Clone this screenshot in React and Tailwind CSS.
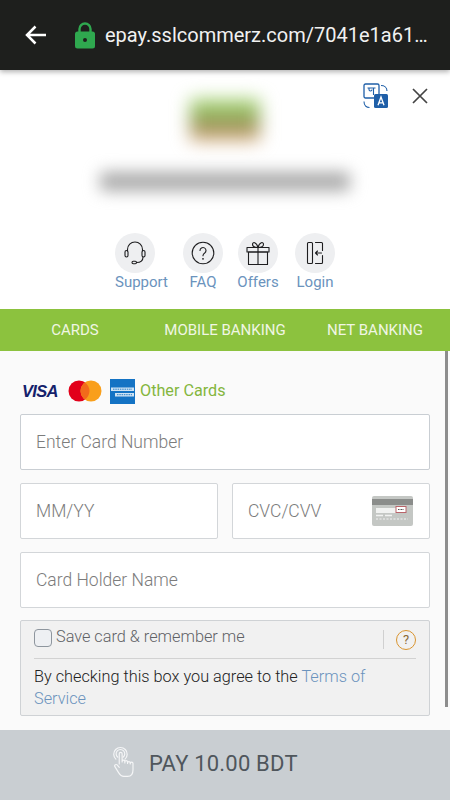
import React from "react";

const Action = ({ label, labelLeft, children, className }) => (
  <div className={"w-10 flex flex-col " + (labelLeft ? "items-start " : "items-center ") + className}>
    <div className="w-10 h-10 rounded-full bg-[#eeeff1] flex items-center justify-center">{children}</div>
    <span className="text-[15px] leading-5 mt-[-1px] text-[#6b93bd] whitespace-nowrap">{label}</span>
  </div>
);

const stroke = { fill: "none", stroke: "#1d1d1f", strokeWidth: 1.1, strokeLinecap: "round", strokeLinejoin: "round" };

export default function App() {
  return (
    <div className="relative w-[450px] h-[800px] overflow-hidden flex flex-col bg-white font-['Roboto',sans-serif]">
      {/* Browser bar */}
      <header className="h-[70px] shrink-0 bg-[#1e1f1d] flex items-center pl-[24px] shadow-[0_2px_5px_rgba(0,0,0,0.3)] z-10">
        <svg width="24" height="24" viewBox="0 0 24 24" className="shrink-0">
          <path d="M22 12H3.500M11.500 3.500 3 12l8.500 8.500" fill="none" stroke="#fff" strokeWidth="2.500" />
        </svg>
        <svg width="22" height="28" viewBox="0 0 22 28" className="ml-[26px] shrink-0">
          <path d="M5.500 12V8a5.500 5.500 0 0 1 11 0v4" fill="none" stroke="#2fa84f" strokeWidth="2.400" />
          <rect x="1" y="10.500" width="20" height="17" rx="2.500" fill="#2fa84f" />
          <circle cx="11" cy="19" r="2" fill="#1e1f1d" />
        </svg>
        <span className="ml-[9px] text-[20px] leading-none text-[#f1f1f1] whitespace-nowrap">epay.sslcommerz.com/7041e1a61…</span>
      </header>

      {/* Merchant section */}
      <section className="relative h-[239px] shrink-0 bg-white flex flex-col items-center">
        <div className="absolute right-[21px] top-[13px] flex items-center gap-[22px]">
          <svg width="26" height="26" viewBox="0 0 26 26">
            <rect x="1" y="1" width="15" height="14" rx="1.500" fill="#fff" stroke="#1f5fa8" strokeWidth="1.300" />
            <path d="M4.500 5h8M6 5v1.500c0 2 3 2 3 0M10.500 5v7" fill="none" stroke="#1f5fa8" strokeWidth="1.100" />
            <path d="M18 2.500c3 0 6 1.800 6 5.500M6.500 24.500c-3 0-5.500-2-5.500-6" fill="none" stroke="#1f5fa8" strokeWidth="1.100" />
            <rect x="11" y="11" width="14" height="14" rx="1.500" fill="#1f5fa8" />
            <path d="M15 22.300 18 14l3 8.300M16 19.800h4" fill="none" stroke="#fff" strokeWidth="1.300" />
          </svg>
          <svg width="18" height="18" viewBox="0 0 18 18">
            <path d="M2 2l14 14M16 2 2 16" stroke="#444" strokeWidth="1.700" fill="none" />
          </svg>
        </div>

        <div className="mt-[29px] w-[70px] h-[42px] blur-[9px] bg-[linear-gradient(to_bottom,#a9dc78_0%,#93b060_40%,#a3905c_70%,#e6b88c_100%)]" />
        <div className="mt-[31px] w-[250px] h-[19px] blur-[8px] rounded-sm bg-[#aaaaaa]" />

        <div className="mt-[42px] self-start ml-[115px] flex items-start">
          <Action label="Support" labelLeft className="mr-[28px]">
            <svg width="24" height="26" viewBox="0 0 24 26">
              <path d="M4.500 11V9.500a7.500 7.500 0 0 1 15 0V11" {...stroke} />
              <rect x="2" y="10.500" width="3" height="6.500" rx="1.500" {...stroke} />
              <rect x="19" y="10.500" width="3" height="6.500" rx="1.500" {...stroke} />
              <path d="M20 17c0 3.500-2.500 5.500-6.500 5.500" {...stroke} />
              <rect x="9" y="21.300" width="4.500" height="2.500" rx="1.200" {...stroke} />
            </svg>
          </Action>
          <Action label="FAQ" className="mr-[15px]">
            <svg width="24" height="24" viewBox="0 0 24 24">
              <circle cx="12" cy="12" r="10.800" {...stroke} />
              <path d="M9 9.500a3 3 0 1 1 4.700 2.500c-1.100.7-1.700 1.300-1.700 2.700" {...stroke} />
              <circle cx="12" cy="17.800" r="0.900" fill="#1d1d1f" />
            </svg>
          </Action>
          <Action label="Offers" className="mr-[17px]">
            <svg width="24" height="26" viewBox="0 0 24 26">
              <rect x="1" y="7.500" width="22" height="4.500" {...stroke} />
              <rect x="2.500" y="12" width="19" height="12.500" {...stroke} />
              <path d="M12 7.500v17M12 7.500C9 7.500 6.500 6.500 6.500 4.300c0-2.600 4-2.600 5.500 3.200 1.500-5.800 5.500-5.800 5.500-3.200 0 2.200-2.500 3.200-5.500 3.200" {...stroke} />
            </svg>
          </Action>
          <Action label="Login">
            <svg width="22" height="26" viewBox="0 0 22 26">
              <path d="M7.500 2.500H4.500a1 1 0 0 0-1 1v19a1 1 0 0 0 1 1h3a1 1 0 0 0 1-1v-19a1 1 0 0 0-1-1zM11.500 2.500h6a1 1 0 0 1 1 1v7M18.500 15.500v7a1 1 0 0 1-1 1h-6" {...stroke} />
              <path d="M17.500 13H11.500M13.500 11 11.500 13l2 2" {...stroke} />
            </svg>
          </Action>
        </div>
      </section>

      {/* Tabs */}
      <nav className="h-[42px] shrink-0 bg-[#8cc23e] flex items-center text-[15px] text-[#f0f6e4]">
        <span className="w-[150px] text-center">CARDS</span>
        <span className="w-[150px] text-center whitespace-nowrap">MOBILE BANKING</span>
        <span className="w-[150px] text-center whitespace-nowrap">NET BANKING</span>
      </nav>

      {/* Form */}
      <main className="flex-1 bg-[#fafafa] px-[20px] pt-[27px]">
        <div className="flex items-center h-[26px] pl-[2px]">
          <span className="text-[16.500px] leading-none font-['Liberation_Sans',sans-serif] font-bold italic tracking-[-0.7px] text-[#14216b] w-[37px]">VISA</span>
          <svg width="34" height="22" viewBox="0 0 34 22" className="ml-[9px]">
            <circle cx="11" cy="11" r="10.500" fill="#e2001a" />
            <circle cx="23" cy="11" r="10.500" fill="#f99f1b" />
            <path d="M17 2.400a10.500 10.500 0 0 1 0 17.200 10.500 10.500 0 0 1 0-17.200" fill="#f26a1b" />
          </svg>
          <svg width="25" height="25" viewBox="0 0 25 25" className="ml-[8px]">
            <rect width="25" height="25" fill="#1473c4" />
            <rect x="1" y="8.500" width="23" height="3.500" fill="#cfe3f3" />
            <rect x="5" y="14" width="19" height="3.500" fill="#cfe3f3" />
            <path d="M3 10.200h19M7 15.700h15" stroke="#1473c4" strokeWidth="0.900" strokeDasharray="1.500 0.800" />
          </svg>
          <span className="ml-[5px] text-[16.200px] text-[#84b63e]">Other Cards</span>
        </div>

        <div className="mt-[10px] h-[56px] border border-[#c9ced3] rounded-[2px] bg-white flex items-center pl-[15px] text-[17.500px] font-light text-[#7c7c7c]">
          Enter Card Number
        </div>

        <div className="mt-[13px] flex gap-[14px]">
          <div className="w-[198px] h-[56px] border border-[#d3d6d9] rounded-[2px] bg-white flex items-center pl-[15px] text-[17.500px] font-light text-[#7c7c7c]">
            MM/YY
          </div>
          <div className="flex-1 h-[56px] border border-[#d3d6d9] rounded-[2px] bg-white flex items-center justify-between pl-[15px] pr-[16px] text-[17.500px] font-light text-[#7c7c7c]">
            CVC/CVV
            <svg width="41" height="30" viewBox="0 0 41 30">
              <rect width="41" height="30" rx="2" fill="#c4c7c4" />
              <rect y="3" width="41" height="6" fill="#8b8d8b" />
              <rect x="4" y="12" width="20" height="5" fill="#f1f2f1" />
              <rect x="24" y="10.500" width="10" height="6" fill="#fff" stroke="#b9646a" strokeWidth="1" />
              <path d="M26 13.500h6" stroke="#555" strokeWidth="1.200" strokeDasharray="1 0.500" />
              <path d="M4 19.500h7M13 19.500h7" stroke="#f1f2f1" strokeWidth="1.300" />
              <path d="M4 23h32" stroke="#f1f2f1" strokeWidth="1.200" strokeDasharray="2 1.500" />
            </svg>
          </div>
        </div>

        <div className="mt-[13px] h-[56px] border border-[#d3d6d9] rounded-[2px] bg-white flex items-center pl-[15px] text-[17.500px] font-light text-[#7c7c7c]">
          Card Holder Name
        </div>

        <div className="mt-[12px] h-[96px] border border-[#cfd2d5] rounded-[2px] bg-[#f1f1f1] px-[13px]">
          <div className="h-[38px] flex items-center border-b border-[#d2d2d2]">
            <span className="w-[18px] h-[18px] rounded-[4px] border border-[#8e969e] bg-[#eef0f3] mb-[4px]" />
            <span className="ml-[4px] text-[16.300px] font-light text-[#5f6266] mb-[4px]">Save card &amp; remember me</span>
            <span className="ml-auto w-px h-[19px] bg-[#d0d0d0]" />
            <span className="ml-[12px] w-[20px] h-[20px] rounded-full border border-[#d9942f] flex items-center justify-center text-[13px] text-[#8a6a35]">?</span>
          </div>
          <p className="mt-[7px] text-[16.300px] leading-[22px] font-light text-[#222]">
            By checking this box you agree to the <span className="text-[#6b93bd]">Terms of Service</span>
          </p>
        </div>
      </main>

      {/* Pay */}
      <footer className="h-[70px] shrink-0 bg-[#c9ced2] flex items-center pl-[113px] pb-[4px]">
        <svg width="25" height="33" viewBox="0 0 26 33" className="mb-[2px]">
          <g fill="none" stroke="#f5f6f7" strokeWidth="1.200" strokeLinecap="round" strokeLinejoin="round">
            <path d="M3 13a7 7 0 1 1 9.500 0M5 11a4.500 4.500 0 1 1 5.500 0" />
            <path d="M6.500 18V7.500a1.500 1.500 0 0 1 3 0V16M9.500 15.500a1.400 1.400 0 0 1 2.800 0V17M12.300 16a1.400 1.400 0 0 1 2.800 0v1.500M15.100 17a1.400 1.400 0 0 1 2.800 0v1M18 17.500a1.400 1.400 0 0 1 2.800 0v6.500c0 4-2 7-5.500 7h-4c-3 0-4-1.500-5.500-4l-4-6.500c-.6-1.500 1.500-2.500 2.500-1.500l2.200 2.500" />
          </g>
        </svg>
        <span className="ml-[11px] text-[22px] text-[#4f565c] tracking-[0.2px]">PAY 10.00 BDT</span>
      </footer>

      {/* Scrollbar overlay */}
      <div className="absolute left-[445px] top-[351px] w-[3px] h-[356px] bg-[#8d8d8d]" />
    </div>
  );
}
